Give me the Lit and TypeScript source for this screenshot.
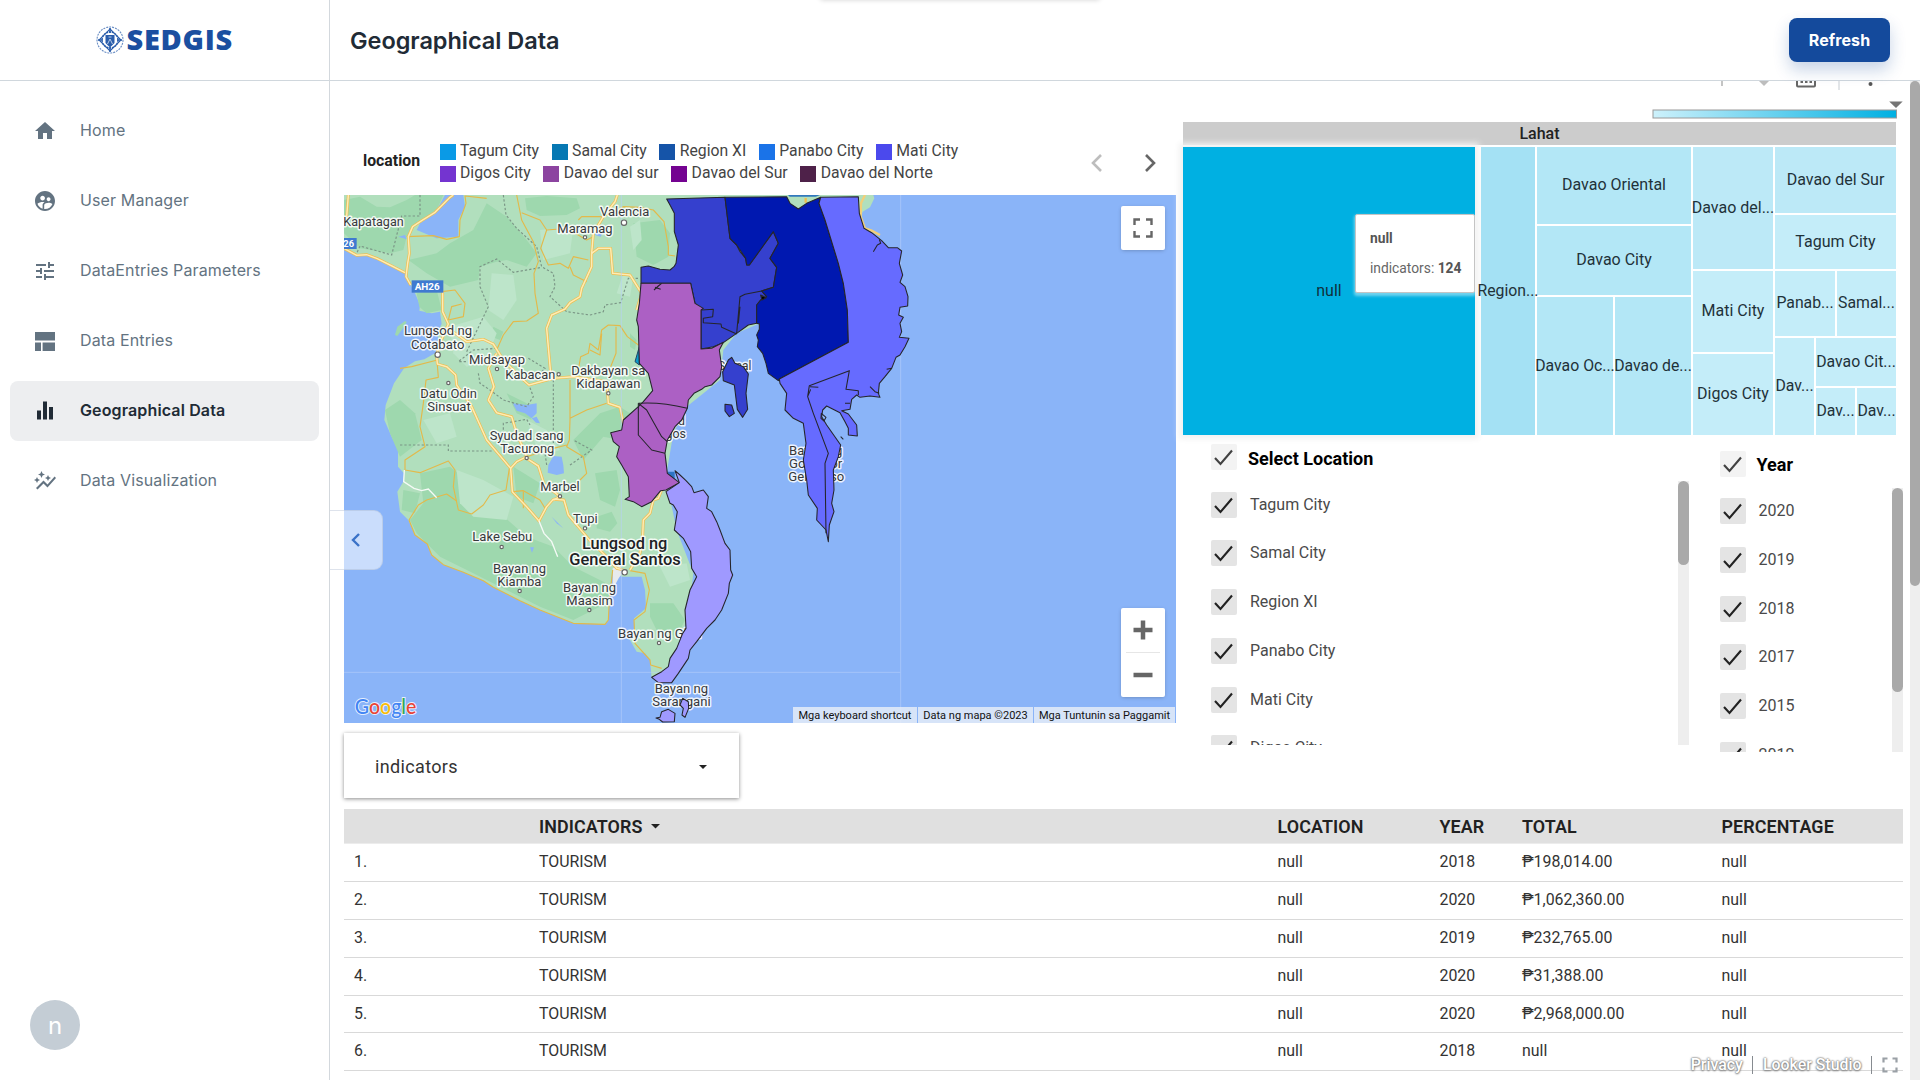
import { LitElement, html, css, svg } from "lit";
import { customElement, property } from "lit/decorators.js";

const NAV = [
  { label: "Home", icon: "M10 20v-6h4v6h5v-8h3L12 3 2 12h3v8z" },
  {
    label: "User Manager",
    icon: "M11.99 2c-5.52 0-10 4.48-10 10s4.48 10 10 10 10-4.48 10-10-4.48-10-10-10zm3.61 6.34c1.07 0 1.93.86 1.93 1.93 0 1.07-.86 1.93-1.93 1.93-1.07 0-1.93-.86-1.93-1.93-.01-1.07.86-1.93 1.93-1.93zm-6-1.58c1.3 0 2.36 1.06 2.36 2.36 0 1.3-1.06 2.36-2.36 2.36s-2.36-1.06-2.36-2.36c0-1.31 1.05-2.36 2.36-2.36zm0 9.13v3.75c-2.4-.75-4.3-2.6-5.14-4.96 1.05-1.12 3.67-1.69 5.14-1.69.53 0 1.2.08 1.9.22-1.64.87-1.9 2.02-1.9 2.68zM11.99 20c-.27 0-.53-.01-.79-.04v-4.07c0-1.42 2.94-2.13 4.4-2.13 1.07 0 2.92.39 3.84 1.15-1.17 2.97-4.06 5.09-7.45 5.09z",
  },
  {
    label: "DataEntries Parameters",
    icon: "M3 17v2h6v-2H3zM3 5v2h10V5H3zm10 16v-2h8v-2h-8v-2h-2v6h2zM7 9v2H3v2h4v2h2V9H7zm14 4v-2H11v2h10zm-6-4h2V7h4V5h-4V3h-2v6z",
  },
  { label: "Data Entries", icon: "M2 3h20v8.400H2zM2 13.500h6v8.500H2zM9.600 13.500H22v8.500H9.600z" },
  { label: "Geographical Data", icon: "M4 11.500h4v9H4zM10 2.500h4v18h-4zM16 8h4v12.500h-4z", active: true },
  {
    label: "Data Visualization",
    icon: "M14.060 9.940L12 9l2.060-.94L15 6l.94 2.060L18 9l-2.060.94L15 12zM4 14l.94-2.060L7 11l-2.060-.94L4 8l-.94 2.060L1 11l2.060.94zm4.500-5l1.090-2.410L12 5.500 9.590 4.410 8.500 2 7.410 4.410 5 5.500l2.410 1.090zm-4 11.500l6-6.010 4 4L23 8.930l-1.410-1.410-7.090 7.970-4-4L3 19z",
  },
];

const LEGEND = [
  [["Tagum City", "#0a9ae6"], ["Samal City", "#0678b3"], ["Region XI", "#1554a8"], ["Panabo City", "#1a73e8"], ["Mati City", "#4b49ed"]],
  [["Digos City", "#7434d0"], ["Davao del sur", "#8c44a0"], ["Davao del Sur", "#740391"], ["Davao del Norte", "#4e2149"]],
];

const ROWS = [
  ["1.", "TOURISM", "null", "2018", "₱198,014.00", "null"],
  ["2.", "TOURISM", "null", "2020", "₱1,062,360.00", "null"],
  ["3.", "TOURISM", "null", "2019", "₱232,765.00", "null"],
  ["4.", "TOURISM", "null", "2020", "₱31,388.00", "null"],
  ["5.", "TOURISM", "null", "2020", "₱2,968,000.00", "null"],
  ["6.", "TOURISM", "null", "2018", "null", "null"],
];

/* ---------- map geometry (three units per pixel) ---------- */

const COAST =
  "M12 225V390L50 406 80 404 110 415 150 435 195 458 200 480 212 495 225 520 240 555 238 572 275 580 300 575 305 612 290 640 300 668 285 700 253 718 225 724 192 745 162 790 137 855 133 900 155 950 174 990 174 1040 192 1060 190 1085 172 1115 180 1175 205 1200 225 1245 262 1272 275 1305 310 1334 370 1357 430 1382 460 1402 540 1442 600 1470 700 1510 795 1513 805 1500 808 1440 818 1350 845 1370 905 1370 915 1410 918 1465 882 1495 885 1545 870 1560 890 1595 915 1600 930 1620 935 1675 985 1650 1045 1490 1060 1360 1010 1230 985 1110 978 1070 1000 940 1040 860 1140 780 1150 690 1190 640 1260 610 1500 560 1560 300 1568 275 1590 262 1603 235 1600 225Z";

const DARK_TERRAIN = [
  "M12 240L60 230 110 260 150 262 200 240 225 225H310L290 270 230 310 200 350 190 390 150 400 60 385 12 340Z",
  "M205 420L290 400 330 370 400 330 440 250 500 290 560 360 590 400 560 440 500 420 470 425 420 440 415 480 330 500 260 460Z",
  "M555 235L620 228 710 235 720 265 680 285 600 288 560 270Z",
  "M880 310L960 300 990 340 985 410 940 435 890 410Z",
  "M230 520L290 510 305 570 260 580 238 560Z",
  "M135 870L180 840 225 880 245 960 180 1010 150 940Z",
  "M240 1060L330 1040 420 1110 480 1180 560 1250 640 1280 700 1340 820 1400 800 1450 700 1500 600 1460 480 1400 400 1360 300 1310 230 1240 210 1200 250 1150Z",
  "M765 1060L830 1050 840 1110 825 1160 780 1140Z",
  "M770 1190L815 1175 832 1210 810 1235 770 1225Z",
  "M520 1040L600 1090 580 1150 530 1130Z",
  "M930 1450L1000 1450 1035 1500 1010 1550 950 1530 930 1490Z",
  "M780 880L840 860 900 900 840 960 790 950 730 1020 700 960Z",
  "M190 1110L240 1120 225 1180 185 1170Z",
  "M870 640L890 660 885 690 870 680Z",
  "M500 820L560 850 575 900 530 880Z",
  "M460 620L490 635 480 660 455 650Z",
];

const LIGHT_TERRAIN = [
  "M455 460L520 465 530 540 490 600 445 570Z",
  "M330 620L430 590 470 640 440 720 380 740 340 700Z",
  "M870 320L900 300 905 360 880 390Z",
  "M250 900L330 880 350 950 290 970Z",
  "M600 330L700 320 690 400 610 420Z",
  "M350 1050L430 1080 520 1130 500 1200 400 1190 360 1150Z",
  "M960 1340L1040 1330 1050 1380 990 1400Z",
  "M850 460L880 470 870 530 830 520Z",
  "M560 900L620 930 660 990 600 1010Z",
];

const LAKES = [
  "M315 225H370L375 260 355 300 355 350 290 355 230 330 240 310 285 280Z",
  "M175 350L195 345 200 358Z",
  "M518 850L560 855 590 850 590 880 575 895 555 880 530 872Z",
  "M575 895L590 890 600 910 588 908Z",
  "M625 1035L640 1008 665 1010 670 1035 672 1060 650 1065 623 1058Z",
  "M635 1190L670 1225 650 1210Z",
  "M765 330L790 335 782 350 765 345Z",
  "M570 1282H582L576 1298Z",
];

const HIGHWAYS = [
  "M340 225L330 232 285 277 245 302 218 320 205 350 208 400 203 430 198 470 212 495",
  "M25 225L20 290",
  "M12 385L50 406 80 404 110 415 150 435 195 458",
  "M308 515L308 575 325 612 300 670 290 705 292 732 320 740 347 765 350 795 395 860 440 960 512 1045 517 1115 560 1160 597 1203 620 1160 640 1138 672 1140 685 1185 750 1262 800 1310 830 1345 850 1350",
  "M832 225L825 245 790 290 760 340 755 400 755 440 725 505 720 530 690 548 675 567 635 585 620 625 632 760",
  "M755 400L775 385 812 385 818 460 870 465 905 520 890 570",
  "M325 625L380 665 430 658 460 672 490 720 550 780 567 795 640 775 700 770 800 785 805 850 840 862 850 910",
  "M470 700L445 745 462 800 445 840 470 878 515 890 530 940 560 1010 530 1025 512 1045",
  "M560 1015L595 1038 612 1092 660 1130 640 1140",
  "M965 1110L955 1135 940 1140 930 1180 910 1200 908 1250 900 1300 870 1350",
];

const ROADS = [
  "M200 350L280 347 320 358 358 350 360 300 378 250 375 228 440 235",
  "M530 225L545 300 580 365 595 425 582 460 585 520 595 580 560 603 520 605 490 645 470 690",
  "M545 278L600 300 620 330 680 325 740 360 760 350",
  "M620 330L602 385 625 435 660 430 685 445 700 410 745 420",
  "M690 440L700 465 740 485",
  "M715 300L725 290 790 290 850 260 900 262 940 270 972 305 985 380 985 405 1005 408",
  "M305 515L345 510 375 550 370 590 325 600M365 552L335 560 325 600",
  "M715 750L722 710 745 700 750 670 775 690 785 630 805 615 840 617 862 650 895 675M828 620L828 700 812 740M785 640L780 705 750 690",
  "M690 780L690 900 688 960 680 980 730 1010 740 1060 720 1080M690 895L740 870 800 850M680 975L640 985 560 1010",
  "M292 720L215 740 180 745",
  "M292 735L295 772 258 780 250 850 240 920 255 980 195 1020 195 1050 240 1058 325 1023 345 1050 340 1100 355 1170 395 1182 430 1155 450 1125 498 1110 508 1045",
  "M207 1200L235 1155 260 1140 320 1122 350 1143",
  "M207 1200L225 1245 262 1272 275 1305 310 1334 370 1357 430 1382 460 1402 540 1442 600 1470 700 1510 795 1513 805 1500 808 1440 818 1350",
  "M520 1115L550 1112 600 1140 615 1165M550 1115V1165",
  "M870 1352L915 1360 928 1410 915 1475 882 1500 885 1570 930 1620 932 1635 965 1645",
];

const DASHES = [
  "M240 225V288H185L155 405 60 378 50 400",
  "M490 225L498 285 530 325 590 380 605 440 640 460 645 500 630 530 680 575 750 585 790 575 795 555 842 548 865 475 900 475",
  "M380 695L445 560 420 500 420 440 470 417 520 457 600 443",
  "M470 685L400 690 355 725 380 725M415 760L420 790 450 810 490 840 560 860 580 830 565 790",
  "M180 975H325V993H460",
  "M490 955V910L560 898 570 915M565 715L615 745 600 760M640 780L640 970",
  "M620 1035L615 1000M690 1035L755 990 700 960",
];

const BLUE =
  "M980 237L1155 232 1170 355 1190 375 1200 395 1217 415 1220 435H1228L1300 335 1315 370 1290 415 1310 442 1300 502 1265 513 1280 530 1262 540 1250 555 1250 610 1225 615 1190 640 1150 668 1120 680 1083 687V565L1065 550 1052 490H903V442L925 438 960 448 990 450 1002 440 1008 430 1015 375 1003 335 1003 280 990 255Z";
const NAVY =
  "M1155 232L1340 230 1350 250 1375 267 1400 250 1442 232 1437 250 1455 300 1495 430 1510 490 1522 570 1525 667 1318 777 1315 782 1285 760 1278 730 1268 700 1252 680 1255 660 1250 645 1258 628V612L1250 610V555L1262 540 1280 530 1265 513 1300 502 1310 442 1290 415 1315 370 1300 335 1228 435H1220L1217 415 1190 375 1170 355Z";
const PERIWINKLE =
  "M1442 232L1555 230 1558 280 1572 325 1595 338 1625 362 1645 383 1672 383 1685 393 1678 430 1688 465 1680 487 1695 500 1704 530 1703 558 1680 562 1676 585 1690 592 1680 610 1685 635 1678 652 1707 655 1695 680 1680 705 1668 712 1655 745 1635 770 1618 790 1615 820 1620 832 1590 828 1560 832 1550 825 1535 838 1530 868 1505 872 1525 882 1550 915 1552 948 1525 945 1525 925 1515 905 1500 878 1460 858 1448 870 1445 890 1460 915 1502 975 1495 1010 1480 1050 1482 1110 1475 1150 1482 1175 1468 1215 1465 1265 1458 1230 1430 1200 1432 1165 1405 1125 1400 1080 1390 1020 1398 970 1390 910 1360 895 1335 870 1340 820 1320 790 1318 777 1525 667 1522 570 1510 490 1495 430 1455 300 1437 250Z";
const PURPLE =
  "M903 490H1052L1065 550 1090 565 1083 570V687L1115 685 1150 667 1138 690 1145 740 1140 770 1115 795 1095 800 1085 808 1062 820 1045 840 1042 865 1025 900 1005 920 982 960 975 1000 982 1060 1018 1088 978 1110 962 1112 935 1145 905 1160 880 1145 855 1138 868 1130 865 1070 845 1035 830 1010 838 980 820 965 812 938 845 930 850 900 895 860 910 845 938 812 925 760 898 730 895 620 890 600 898 550Z";
const LAVENDER =
  "M978 1115L1018 1088 1005 1052 1020 1065 1038 1082 1055 1100 1062 1118 1090 1110 1105 1130 1100 1165 1115 1175 1130 1205 1140 1230 1155 1270 1170 1290 1172 1350 1178 1365 1168 1390 1165 1420 1145 1470 1125 1500 1100 1525 1070 1565 1050 1590 1045 1615 1015 1660 995 1688H955L935 1672 965 1655 985 1640 990 1615 1010 1585 1028 1540 1038 1525 1035 1470 1050 1410 1070 1370 1055 1345 1052 1295 1030 1255 1003 1230 1012 1175 1000 1155 990 1150Z";

/* text, start x, baseline y, width, optional size */
const PLACES: [string, number, number, number, number?][] = [
  ["Kapatagan", 10, 318, 181],
  ["Valencia", 780, 289, 148],
  ["Maramag", 652, 338, 166],
  ["Lungsod ng", 192, 646, 204],
  ["Cotabato", 213, 686, 160],
  ["Midsayap", 387, 732, 168],
  ["Kabacan", 496, 777, 150],
  ["Dakbayan sa", 694, 766, 222],
  ["Kidapawan", 709, 805, 192],
  ["Datu Odin", 241, 833, 170],
  ["Sinsuat", 262, 872, 130],
  ["Syudad sang", 449, 959, 222],
  ["Tacurong", 481, 998, 162],
  ["Marbel", 601, 1112, 118],
  ["Tupi", 699, 1209, 74],
  ["Lake Sebu", 397, 1264, 180],
  ["Bayan ng", 459, 1358, 159],
  ["Kiamba", 472, 1397, 132],
  ["Bayan ng", 669, 1415, 159],
  ["Maasim", 679, 1454, 140],
  ["Lungsod ng", 726, 1287, 256, 48],
  ["General Santos", 688, 1335, 334, 48],
  ["Bayan ng Glan", 834, 1554, 250],
  ["Samal", 1134, 751, 100],
  ["Lungsod", 893, 914, 142],
  ["ng Digos", 893, 954, 145],
  ["Bayan ng", 1347, 1004, 160],
  ["Governor", 1347, 1043, 160],
  ["Generoso", 1345, 1083, 168],
];

const DOTS: [number, number, number][] = [
  [852, 308, 8], [735, 352, 5], [293, 704, 8], [471, 747, 5], [656, 763, 5], [805, 820, 5], [325, 789, 5],
  [560, 1014, 5], [660, 1129, 5], [735, 1225, 5], [485, 1281, 5], [539, 1413, 5], [748, 1470, 5], [854, 1357, 8], [957, 1569, 5],
];

const icon = (d: string) => html`<svg class="icon" viewBox="0 0 24 24"><path d=${d} fill="currentColor"></path></svg>`;

@customElement("geo-map")
class GeoMap extends LitElement {
  static styles = css`
    :host { display: block; position: relative; width: 832px; height: 528px; overflow: hidden; font-family: Roboto, sans-serif; }
    .canvas { display: block; width: 832px; height: 528px; background: #8ab4f8; }
    .place { font-family: Roboto, sans-serif; fill: #37393c; stroke: #fff; stroke-width: 9; stroke-linejoin: round; paint-order: stroke; stroke-opacity: .85; }
    .major { font-weight: 500; fill: #202124; }
    .shield { font: 700 29px Roboto, sans-serif; fill: #fff; }
    .brand { font: 500 66px Lato, sans-serif; stroke: #fff; stroke-width: 6; paint-order: stroke; stroke-opacity: .8; }
    .region path { stroke: #25252b; stroke-width: 3.200; stroke-linejoin: round; }
    .ctl { position: absolute; right: 11px; width: 44px; background: #fff; border-radius: 2px; box-shadow: 0 1px 4px -1px rgba(0,0,0,.3); display: flex; flex-direction: column; align-items: center; color: #666; }
    .full { top: 11px; height: 44px; justify-content: center; }
    .zoom { bottom: 26px; height: 89px; }
    .zoom span { height: 44px; display: flex; align-items: center; }
    .zoom i { width: 34px; height: 1px; background: #e6e6e6; }
    .legal { position: absolute; right: 0; bottom: 0; display: flex; gap: 1px; height: 16px; font-size: 11px; line-height: 17px; color: #111; white-space: nowrap; padding-right: 1px; }
    .legal span { background: rgba(232,238,248,.82); text-align: center; }
    .k { width: 124px; } .d { width: 115px; } .t { width: 141px; }
  `;

  render() {
    return html`
      <svg class="canvas" viewBox="12 225 2496 1584">
        <path d=${COAST} fill="#b1dfbd"></path>
        <path d="M165 645L172 620 195 603 200 606 185 630 172 648Z" fill="#9ed8ae"></path>
        ${DARK_TERRAIN.map((d) => svg`<path d=${d} fill="#9ed8ae"/>`)}
        ${LIGHT_TERRAIN.map((d) => svg`<path d=${d} fill="#bde5ca"/>`)}
        ${LAKES.map((d) => svg`<path d=${d} fill="#8ab4f8"/>`)}
        <path d="M818 1345L838 1338 852 1352 836 1375 825 1395 818 1390Z" fill="#e8eaed"></path>
        ${DASHES.map((d) => svg`<path d=${d} fill="none" stroke="#7b9686" stroke-width="3.500" stroke-dasharray="7 6"/>`)}
        ${ROADS.map((d) => svg`<path d=${d} fill="none" stroke="#e3b94a" stroke-width="3.400" stroke-linejoin="round"/>`)}
        ${HIGHWAYS.map((d) => svg`<path d=${d} fill="none" stroke="#f0bd4e" stroke-width="8.500" stroke-linejoin="round"/>`)}
        ${HIGHWAYS.map((d) => svg`<path d=${d} fill="none" stroke="#fdecb4" stroke-width="4.500" stroke-linejoin="round"/>`)}
        <path d="M193 1050L191 1085 222 1105 245 1112 265 1107 290 1133M597 1203L612 1240 635 1265 653 1310" fill="none" stroke="#f5faf6" stroke-width="4"></path>
        <path d="M844 225V1809M1682 225V1809M12 1657H1682" stroke="#b7cffb" stroke-width="3" opacity=".6"></path>
        <rect x="12" y="354" width="38" height="33" fill="#3f7ad0"></rect>
        <text class="shield" x="10" y="381" textLength="32" lengthAdjust="spacingAndGlyphs">26</text>
        <rect x="215" y="481" width="95" height="37" fill="#3f7ad0"></rect>
        <text class="shield" x="224" y="510" textLength="75" lengthAdjust="spacingAndGlyphs">AH26</text>
        ${DOTS.map(([x, y, r]) => svg`<circle cx=${x} cy=${y} r=${r} fill="#fff" stroke="#666" stroke-width="3.500"/>`)}
        ${PLACES.map(([t, x, y, w, s]) => svg`<text class=${s ? "place major" : "place"} x=${x} y=${y} font-size=${s ?? 40} textLength=${w} lengthAdjust="spacingAndGlyphs">${t}</text>`)}
        <path d="M1344 225H1440L1425 232H1350Z" fill="#3178bd"></path>
        <path d="M1340 230H1442L1400 250 1375 267 1350 250Z" fill="#b1dfbd"></path>
        <path d="M1397 234V248" stroke="#f0bd4e" stroke-width="7"></path>
        <path d="M1575 225L1563 250 1562 290 1575 325 1595 332 1620 345" fill="none" stroke="#f3cf78" stroke-width="7"></path>
        <path d="M898 680L885 725 898 735Z" fill="#0a9acb" stroke="#246" stroke-width="3"></path>
        <path d="M982 1055H1004V1080L984 1072Z" fill="#2d74c4"></path>
        <g class="region">
          <path d=${BLUE} fill="#3540ce"></path>
          <path d=${NAVY} fill="#0018b0"></path>
          <path d=${PERIWINKLE} fill="#666bff"></path>
          <path d=${PURPLE} fill="#ac60c4"></path>
          <path d=${LAVENDER} fill="#9f99ff"></path>
          <path d="M1175 712L1185 730 1210 740 1225 762 1218 820 1223 868 1208 892 1192 868 1183 795 1150 782 1148 755 1165 720Z" fill="#3540ce"></path>
          <path d="M1155 853L1175 855 1183 880 1168 890 1155 873Z" fill="#3540ce"></path>
          <path d="M1085 570L1120 568 1118 590 1090 595V608L1143 612 1145 622 1190 642M1190 640L1200 530 1215 523 1265 513M1195 610L1200 560" fill="none"></path>
          <path d="M1458 1240L1455 1030 1465 1000 1420 880 1403 830 1408 797 1528 752 1518 808 1555 812V825M1410 800L1435 802M1403 830L1412 808M1600 395L1612 375 1622 370 1618 358M1655 745L1640 748M1590 800L1605 815 1618 820M1515 850H1530M1444 880L1458 892 1452 903 1443 895Z" fill="none"></path>
          <path d="M895 850Q960 845 1042 865M895 850V945L935 990 975 1000M895 850L920 870 965 950 982 965" fill="none"></path>
          <path d="M942 510L955 498 965 490M945 502L962 508M1262 525L1278 533 1266 540Z" stroke-width="6"></path>
          <path d="M1502 950L1510 958" stroke-width="8"></path>
        </g>
        <text class="place" x="944" y="1720" font-size="40" textLength="160" lengthAdjust="spacingAndGlyphs">Bayan ng</text>
        <text class="place" x="937" y="1759" font-size="40" textLength="175" lengthAdjust="spacingAndGlyphs">Sarangani</text>
        <g class="region">
          <path d="M948 1794L960 1792 965 1775 985 1768 1005 1780 1003 1805 968 1806 958 1798Z" fill="#9f99ff"></path>
          <path d="M1028 1735L1045 1745 1046 1765 1035 1792 1026 1785 1030 1765 1020 1755Z" fill="#9f99ff"></path>
        </g>
        <text class="brand" x="44" y="1783" textLength="185" lengthAdjust="spacingAndGlyphs"><tspan fill="#4285f4">G</tspan><tspan fill="#ea4335">o</tspan><tspan fill="#fbbc04">o</tspan><tspan fill="#4285f4">g</tspan><tspan fill="#34a853">l</tspan><tspan fill="#ea4335">e</tspan></text>
      </svg>
      <div class="ctl full">
        <svg width="20" height="20" viewBox="0 0 20 20" fill="none" stroke="currentColor" stroke-width="2.400"><path d="M1.500 7V1.500H7M13 1.500h5.500V7M18.500 13v5.500H13M7 18.500H1.500V13"></path></svg>
      </div>
      <div class="ctl zoom">
        <span><svg width="20" height="20" viewBox="0 0 20 20" stroke="currentColor" stroke-width="4.500"><path d="M.5 10h19M10 .5v19"></path></svg></span>
        <i></i>
        <span><svg width="20" height="20" viewBox="0 0 20 20" stroke="currentColor" stroke-width="4.500"><path d="M.5 10h19"></path></svg></span>
      </div>
      <div class="legal"><span class="k">Mga keyboard shortcut</span><span class="d">Data ng mapa ©2023</span><span class="t">Mga Tuntunin sa Paggamit</span></div>
    `;
  }
}

@customElement("tree-map")
class TreeMap extends LitElement {
  static styles = css`
    :host { display: block; position: relative; width: 713px; font-family: Roboto, sans-serif; }
    .head { height: 23px; background: #ccc; text-align: center; font: 500 16px/24px Roboto, sans-serif; color: #222; margin-bottom: 2px; }
    .cells { display: flex; gap: 2px; height: 288px; font-size: 16px; color: #1f3239; }
    .cells div { box-sizing: border-box; }
    .col { display: flex; flex-direction: column; gap: 2px; }
    .row { display: flex; gap: 2px; }
    .c { display: flex; align-items: center; justify-content: center; white-space: nowrap; background: #c4edf9; flex: none; padding-bottom: 2px; }
    .n { font-size: 15.800px; }
    .a { background: #b3e7f6; } .b { background: #a4e1f4; } .m { background: #bce9f7; }
    .big { width: 292px; background: #00b0e2; color: #10303c; margin-right: 4px; box-shadow: 0 0 6px 4px #f2f2f2; position: relative; }
    .b { position: relative; }
    .w54 { width: 54px; } .w154 { width: 154px; } .w76 { width: 76px; } .w80 { width: 80px; } .w60 { width: 60px; } .w59 { width: 59px; } .w39 { width: 39px; }
    .h77 { height: 77px; } .h69 { height: 69px; } .h138 { height: 138px; } .h122 { height: 122px; } .h81 { height: 81px; }
    .h66 { height: 66px; } .h54 { height: 54px; } .h65 { height: 65px; } .h97 { height: 97px; } .h48 { height: 48px; } .h47 { height: 47px; }
    .w121 { width: 121px; }
    .tip { position: absolute; left: 172px; top: 92px; width: 120px; height: 79px; box-sizing: border-box; padding: 13px 14px; background: #fff; border: 1px solid #c4c4c4; border-radius: 2px; box-shadow: 0 2px 3px 1px rgba(255,255,255,.45); font-size: 13.800px; line-height: 20px; color: #666; display: flex; flex-direction: column; gap: 10px; white-space: nowrap; }
    .tip b { font-weight: 700; color: #555; }
  `;

  render() {
    return html`
      <div class="head">Lahat</div>
      <div class="cells">
        <div class="c big">null</div>
        <div class="c b n w54">Region...</div>
        <div class="col">
          <div class="c a w154 h77">Davao Oriental</div>
          <div class="c a w154 h69">Davao City</div>
          <div class="row"><div class="c a n w76 h138">Davao Oc...</div><div class="c a n w76 h138">Davao de...</div></div>
        </div>
        <div class="col">
          <div class="c m w80 h122">Davao del...</div>
          <div class="c w80 h81">Mati City</div>
          <div class="c w80 h81">Digos City</div>
        </div>
        <div class="col">
          <div class="c m w121 h66">Davao del Sur</div>
          <div class="c w121 h54">Tagum City</div>
          <div class="row"><div class="c n w60 h65">Panab...</div><div class="c n w59 h65">Samal...</div></div>
          <div class="row">
            <div class="c n w39 h97">Dav...</div>
            <div class="col">
              <div class="c n w80 h48">Davao Cit...</div>
              <div class="row"><div class="c n w39 h47">Dav...</div><div class="c n w39 h47">Dav...</div></div>
            </div>
          </div>
        </div>
      </div>
      <div class="tip"><b>null</b><span>indicators: <b>124</b></span></div>
    `;
  }
}

@customElement("filter-list")
class FilterList extends LitElement {
  @property() heading = "";
  @property({ type: Array }) items: string[] = [];
  @property({ type: Number }) thumb = 84;

  static styles = css`
    :host { display: block; font-family: Roboto, sans-serif; }
    .top { display: flex; align-items: center; height: 26px; gap: 11px; font-size: 18px; font-weight: 700; color: #000; margin-bottom: 10px; }
    .box { width: 26px; height: 26px; border-radius: 2px; background: #e4e4e4; flex: none; }
    .top .box { background: #f1f1f1; opacity: .85; position: relative; top: -1px; }
    .body { display: flex; justify-content: space-between; height: 264px; overflow: hidden; }
    .list { padding-top: 10.500px; }
    .item { display: flex; align-items: center; gap: 13px; height: 26px; margin-bottom: 22.800px; font-size: 16px; color: #4a4a4a; white-space: nowrap; }
    .item span { position: relative; top: -.5px; }
    .track { width: 11px; background: #eee; flex: none; }
    .thumb { background: #a9a9a9; border-radius: 6px; }
  `;

  private check() {
    return html`<svg class="box" viewBox="0 0 26 26"><path d="M4 14L9.500 20 21 6.500" fill="none" stroke="#222" stroke-width="2.100"></path></svg>`;
  }

  render() {
    return html`
      <div class="top">${this.check()}<span>${this.heading}</span></div>
      <div class="body">
        <div class="list">${this.items.map((t) => html`<div class="item">${this.check()}<span>${t}</span></div>`)}</div>
        <div class="track"><div class="thumb" style="height:${this.thumb}px"></div></div>
      </div>
    `;
  }
}

@customElement("app-root")
class AppRoot extends LitElement {
  static styles = css`
    :host { display: block; width: 1920px; height: 1080px; overflow: hidden; background: #fff; font-family: Inter, sans-serif; color: #212b36; }
    .shell { display: flex; width: 1920px; height: 1080px; position: relative; }
    .side { width: 329px; border-right: 1px solid #d3d8dd; display: flex; flex-direction: column; flex: none; }
    .logo { height: 80px; border-bottom: 1px solid #d0d7dd; display: flex; align-items: center; padding-left: 95.500px; gap: 3px; }
    .logo svg { width: 28px; height: 28px; }
    .word { font: 800 29px "Open Sans", sans-serif; color: #1b4fa0; letter-spacing: .7px; margin-top: -3px; }
    nav { display: flex; flex-direction: column; gap: 10px; padding: 20px 10px; flex: 1; }
    .link { height: 60px; border-radius: 8px; display: flex; align-items: center; gap: 23px; padding-left: 23px; font-size: 16px; letter-spacing: .13px; color: #637381; }
    .link span { margin-top: -2px; }
    .active { background: #edeef0; color: #212b36; font-weight: 600; }
    .icon { width: 24px; height: 24px; flex: none; }
    .avatar { width: 50px; height: 50px; border-radius: 50%; margin: 0 0 30px 30px; background: #c4cdd5; color: #fff; font-size: 24px; display: flex; align-items: center; justify-content: center; }
    .main { flex: 1; display: flex; flex-direction: column; min-width: 0; }
    header { height: 80px; border-bottom: 1px solid #d0d7dd; flex: none; display: flex; align-items: center; justify-content: space-between; padding: 0 30px 0 20px; position: relative; }
    h1 { margin: 0; font-size: 23.500px; font-weight: 600; letter-spacing: -.04px; }
    .notch { position: absolute; left: 490px; top: -6px; width: 280px; height: 6px; border-radius: 4px; box-shadow: 0 0 5px rgba(0,0,0,.18); }
    .refresh { width: 101px; height: 44px; border-radius: 8px; background: #144a9c; color: #fff; font-size: 16px; font-weight: 700; letter-spacing: .1px; display: flex; align-items: center; justify-content: center; box-shadow: 0 8px 16px rgba(20,74,156,.24); }
    .scroller { flex: 1; display: flex; min-height: 0; overflow: hidden; }
    .report { flex: 1; padding-left: 14px; font-family: Roboto, sans-serif; }
    .rail { width: 10px; background: #eee; }
    .rail div { height: 505px; border-radius: 5px; background: #a9a9a9; }
    .top { display: flex; gap: 7px; height: 652px; }
    .left { width: 832px; flex: none; }
    .legend { height: 54px; padding: 60px 15px 0 19px; display: flex; align-items: center; }
    .legend b { font-size: 15.800px; font-weight: 700; color: #222; width: 76.500px; margin-top: -15px; }
    .keys { display: flex; flex-direction: column; gap: 4px; flex: 1; margin-top: -13px; }
    .keyrow { display: flex; gap: 12.500px; }
    .key { display: flex; gap: 4.500px; font-size: 15.750px; line-height: 18px; color: #444; white-space: nowrap; }
    .key i { width: 16px; height: 16px; margin-top: 2px; }
    .pager { display: flex; gap: 31px; margin-top: -11px; }
    .right { width: 720px; flex: none; position: relative; }
    .tools { height: 20px; display: block; width: 720px; }
    .scale { display: flex; justify-content: flex-end; height: 21px; }
    .scale svg { width: 252px; height: 21px; }
    .filters { display: flex; margin-top: 10px; }
    .loc { width: 478px; margin-left: 28px; }
    .yr { width: 183.500px; margin: 6.500px 0 0 30.500px; }
    .drop { width: 395px; height: 65px; margin-bottom: 11px; box-sizing: border-box; padding: 2px 32px 0 31px; display: flex; align-items: center; justify-content: space-between; font-size: 18px; letter-spacing: .35px; color: #333; box-shadow: 0 1px 4px rgba(0,0,0,.45); }
    .tr { display: grid; grid-template-columns: 185px 738.500px 162px 82.500px 199.500px 1fr; width: 1549px; padding-left: 10px; height: 36.900px; line-height: 35px; border-bottom: 1px solid #d9d9d9; font-size: 15.900px; color: #333; }
    .th { height: 34px; line-height: 35px; background: #e0e0e0; font-weight: 600; font-size: 17.900px; letter-spacing: .1px; color: #212121; border-bottom-color: #ececec; }
    .th span { white-space: nowrap; }
    .sort { margin-left: 4px; }
    .toggle { position: absolute; left: 330px; top: 510px; width: 53px; height: 60px; box-sizing: border-box; border: 1px solid rgba(160,175,200,.35); border-left: none; border-radius: 0 9px 9px 0; background: rgba(255,255,255,.55); color: #3a72c8; display: flex; align-items: center; justify-content: center; }
    .credit { position: absolute; right: 22.500px; bottom: 4px; height: 23px; display: flex; align-items: center; font: 500 15.900px Roboto, sans-serif; color: #fff; text-shadow: 0 0 2px #777, 0 0 2px #777, 0 1px 2px #999; white-space: nowrap; }
    .credit i { width: 1px; height: 18px; background: #868b90; margin: 0 9.500px; }
  `;

  render() {
    return html`
      <div class="shell">
        <aside class="side">
          <div class="logo">
            <svg viewBox="0 0 28 28" fill="none" stroke="#2a5dab">
              <circle cx="14" cy="14" r="13" stroke-width="1.100" stroke-dasharray="2 1" opacity=".7"></circle>
              <path d="M14 3L25 14 14 25 3 14Z" stroke-width="1.100"></path>
              <circle cx="14" cy="14" r="8" stroke-width="1.400" stroke-dasharray="2 .8"></circle>
              <path d="M9.500 9h9v8l-4.500 4.500-4.500-4.500Z" fill="#2a5dab" stroke="none"></path>
              <path d="M14 2v5M14 21v5M2 14h5M21 14h5" stroke-width="1.600"></path>
              <path d="M11.500 18l2.500-5 2.500 5M12.500 11h3" stroke="#dce7f5" stroke-width=".8"></path>
            </svg>
            <span class="word">SEDGIS</span>
          </div>
          <nav>${NAV.map((n) => html`<div class=${n.active ? "link active" : "link"}>${icon(n.icon)}<span>${n.label}</span></div>`)}</nav>
          <div class="avatar">n</div>
        </aside>
        <div class="main">
          <header><div class="notch"></div><h1>Geographical Data</h1><div class="refresh">Refresh</div></header>
          <div class="scroller">
            <div class="report">
              <div class="top">
                <div class="left">
                  <div class="legend">
                    <b>location</b>
                    <div class="keys">
                      ${LEGEND.map((r) => html`<div class="keyrow">${r.map(([t, c]) => html`<div class="key"><i style="background:${c}"></i>${t}</div>`)}</div>`)}
                    </div>
                    <div class="pager">
                      <svg width="22" height="22" viewBox="0 0 22 22" fill="none" stroke="#bdbdbd" stroke-width="2.600"><path d="M15 3L7 11l8 8"></path></svg>
                      <svg width="22" height="22" viewBox="0 0 22 22" fill="none" stroke="#666" stroke-width="2.600"><path d="M7 3l8 8-8 8"></path></svg>
                    </div>
                  </div>
                  <geo-map></geo-map>
                </div>
                <div class="right">
                  <svg class="tools" viewBox="0 0 720 20">
                    <path d="M539 0V5" stroke="#c4c4c4" stroke-width="2"></path>
                    <path d="M576 0H586L581 5Z" fill="#bdbdbd"></path>
                    <path d="M614 0V4.500Q614 5.500 615 5.500H631Q632 5.500 632 4.500V0" fill="none" stroke="#666" stroke-width="2"></path>
                    <path d="M617.500 1H629" stroke="#666" stroke-width="2" stroke-dasharray="2.500 2"></path>
                    <path d="M656 0V9" stroke="#d8dce0" stroke-width="1.500"></path>
                    <circle cx="687.500" cy="3" r="2" fill="#555"></circle>
                  </svg>
                  <div class="scale">
                    <svg viewBox="0 0 252 21">
                      <defs><linearGradient id="ramp"><stop offset="0" stop-color="#cdf1fb"></stop><stop offset="1" stop-color="#00b0e2"></stop></linearGradient></defs>
                      <rect x="2" y="9" width="243.500" height="8" fill="url(#ramp)" stroke="#9a9a9a"></rect>
                      <path d="M238.200 .5H251.700L245 7Z" fill="#757575"></path>
                    </svg>
                  </div>
                  <tree-map></tree-map>
                  <div class="filters">
                    <filter-list class="loc" heading="Select Location" thumb="84" .items=${["Tagum City", "Samal City", "Region XI", "Panabo City", "Mati City", "Digos City"]}></filter-list>
                    <filter-list class="yr" heading="Year" thumb="204" .items=${["2020", "2019", "2018", "2017", "2015", "2012"]}></filter-list>
                  </div>
                </div>
              </div>
              <div class="drop">indicators<svg width="8" height="4" viewBox="0 0 8 4"><path d="M0 0H8L4 4Z" fill="#222"></path></svg></div>
              <div class="tr th"><span></span><span>INDICATORS <svg class="sort" width="9" height="12" viewBox="0 0 9 12"><path d="M0 3H9L4.500 7.500Z" fill="#222"></path></svg></span><span>LOCATION</span><span>YEAR</span><span>TOTAL</span><span>PERCENTAGE</span></div>
              ${ROWS.map((r) => html`<div class="tr">${r.map((c) => html`<span>${c}</span>`)}</div>`)}
            </div>
            <div class="rail"><div></div></div>
          </div>
        </div>
        <div class="toggle"><svg width="10" height="14" viewBox="0 0 10 14" fill="none" stroke="currentColor" stroke-width="2.400"><path d="M8 1L2 7l6 6"></path></svg></div>
        <div class="credit">Privacy<i></i>Looker Studio<i></i><svg width="16" height="16" viewBox="0 0 16 16" fill="none" stroke="#9aa0a6" stroke-width="2.200"><path d="M1.500 5.500V1.500H5.500M10.500 1.500h4V5.500M14.500 10.500v4H10.500M5.500 14.500H1.500V10.500"></path></svg></div>
      </div>
    `;
  }
}
